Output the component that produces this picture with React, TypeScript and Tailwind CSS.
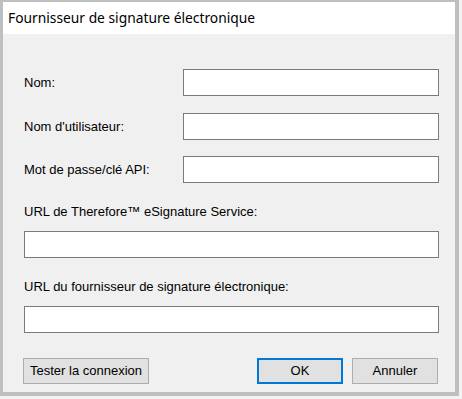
export default function App() {
  const label = "text-[13px] leading-[16px] text-black";
  const input = "h-[27px] bg-white border border-[#7a7a7a]";
  const btn =
    "h-[26px] bg-[#e1e1e1] text-[13px] text-black flex items-center justify-center";

  return (
    <div
      className="w-[462px] h-[399px] bg-[#f3f3f3]"
      style={{ fontFamily: '"Liberation Sans", Arial, sans-serif' }}
    >
      <div className="w-[459px] h-[396px] flex flex-col border-[#bfbfbf] border-l-[3px] border-t-2 border-r-4 border-b-4">
        {/* Title bar */}
        <div className="h-[32px] bg-white flex items-center pl-[5px]">
          <span
            className="text-[13.8px] text-black"
            style={{ fontFamily: '"Noto Sans", "Open Sans", sans-serif' }}
          >
            Fournisseur de signature électronique
          </span>
        </div>

        {/* Body */}
        <div className="flex-1 bg-[#f0f0f0] pl-[21px] pr-[16px] pt-[35px] flex flex-col">
          <div className="flex items-center">
            <span className={`${label} w-[159px]`}>Nom:</span>
            <div className={`${input} flex-1`} />
          </div>
          <div className="flex items-center mt-[17px]">
            <span className={`${label} w-[159px]`}>Nom d'utilisateur:</span>
            <div className={`${input} flex-1`} />
          </div>
          <div className="flex items-center mt-[16px]">
            <span className={`${label} w-[159px]`}>Mot de passe/clé API:</span>
            <div className={`${input} flex-1`} />
          </div>

          <span className={`${label} mt-[21px]`}>URL de Therefore™ eSignature Service:</span>
          <div className={`${input} mt-[11px]`} />

          <span className={`${label} mt-[21px]`}>URL du fournisseur de signature électronique:</span>
          <div className={`${input} mt-[11px]`} />

          <div className="flex items-center mt-[25px] pr-[1px]">
            <div className={`${btn} w-[126px] -ml-[1px] border border-[#adadad]`}>Tester la connexion</div>
            <div className="flex-1" />
            <div className={`${btn} w-[86px] border-2 border-[#0078d7]`}>OK</div>
            <div className={`${btn} w-[86px] ml-[9px] border border-[#adadad]`}>Annuler</div>
          </div>
        </div>
      </div>
    </div>
  );
}
